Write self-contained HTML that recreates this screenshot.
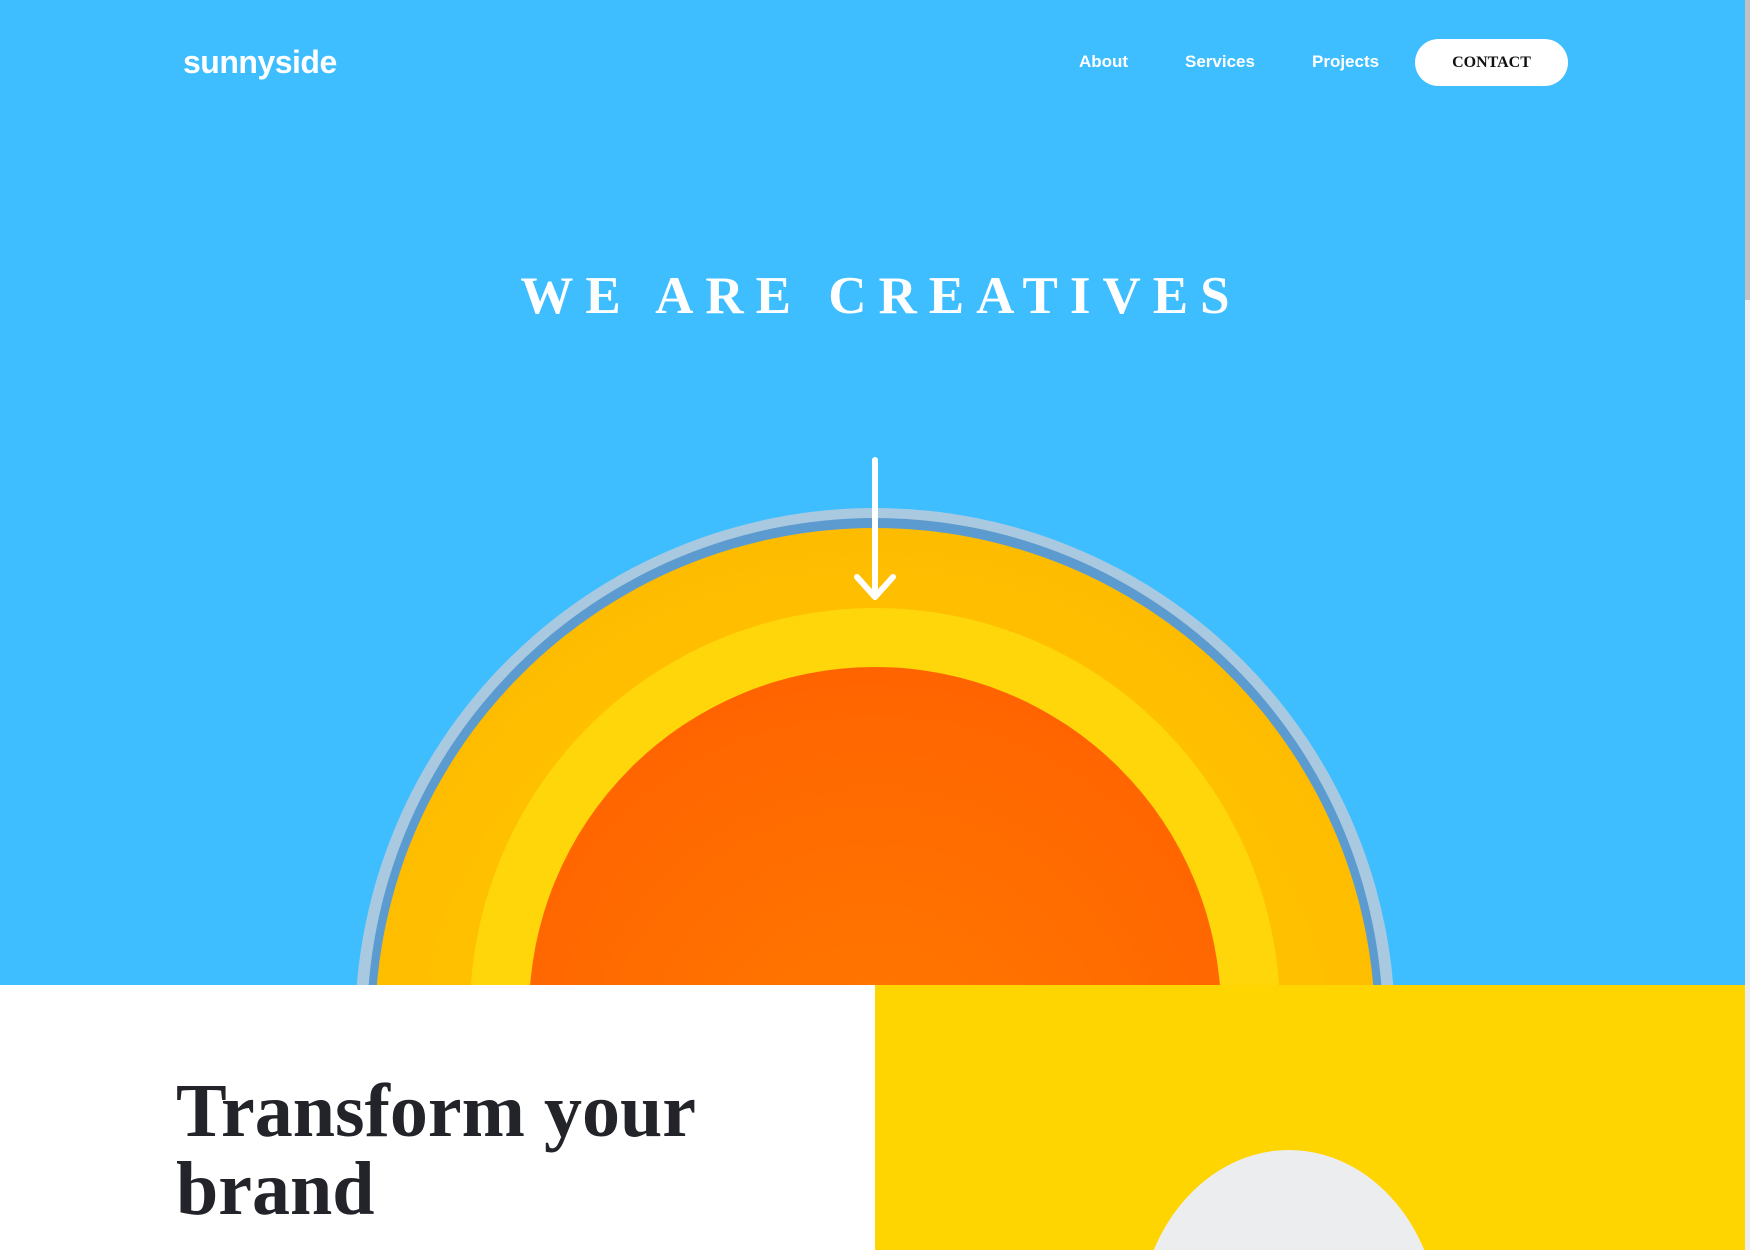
<!DOCTYPE html>
<html><head><style>
*{margin:0;padding:0;box-sizing:border-box}
html,body{width:1750px;height:1250px;overflow:hidden}
body{position:relative;background:#fff;font-family:"Liberation Sans",sans-serif}
.hero{position:absolute;left:0;top:0;width:1750px;height:985px;background:#3ebeff;overflow:hidden}
.c{position:absolute;border-radius:50%}
.logo{position:absolute;left:183px;top:44px;color:#fff;font-weight:bold;font-size:32px;letter-spacing:-0.5px}
.nav a{position:absolute;top:52px;color:#fff;font-size:17px;font-weight:bold;text-decoration:none}
.btn{position:absolute;left:1415px;top:39px;width:153px;height:47px;border-radius:24px;background:#fff;color:#111;font-family:"Liberation Serif",serif;font-weight:bold;font-size:16px;text-align:center;line-height:47px}
h1{position:absolute;left:0;width:1750px;top:266px;text-align:center;color:#fff;font-family:"Liberation Serif",serif;font-size:53px;letter-spacing:12px;font-weight:bold;padding-left:12px}
h2{position:absolute;left:176px;top:1072px;font-family:"Liberation Serif",serif;font-size:76px;line-height:78px;color:#23242a;font-weight:bold}
.sb{position:absolute;right:0;top:0;width:5px;height:1250px;background:#eee}
.sb div{width:5px;height:300px;background:#c1c1c1}
</style></head><body>
<div class="hero">
 <div class="c" style="left:355px;top:508px;width:1040px;height:1040px;background:#a9c9e0"></div>
 <div class="c" style="left:367px;top:518px;width:1016px;height:1016px;background:#5c9bd0"></div>
 <div class="c" style="left:375px;top:528px;width:1000px;height:1000px;background:radial-gradient(circle at 50% 55%,#ffc000 60%,#fdb300 100%)"></div>
 <div class="c" style="left:470px;top:608px;width:810px;height:810px;background:#ffd60a"></div>
 <div class="c" style="left:529px;top:667px;width:692px;height:692px;background:radial-gradient(circle at 50% 60%,#ff7a00,#ff6600 70%,#ff5a00)"></div>
 <svg style="position:absolute;left:850px;top:455px" width="50" height="150"><path d="M25 5V142M7 122L25 142L43 122" stroke="#fff" stroke-width="6" fill="none" stroke-linecap="round" stroke-linejoin="round"/></svg>
</div>
<div class="logo">sunnyside</div>
<div class="nav"><a style="left:1079px">About</a><a style="left:1185px">Services</a><a style="left:1312px">Projects</a></div>
<div class="btn">CONTACT</div>
<h1>WE ARE CREATIVES</h1>
<div style="position:absolute;left:875px;top:985px;width:875px;height:265px;background:#fed401;overflow:hidden">
 <div class="c" style="left:263px;top:165px;width:302px;height:360px;background:#ecedef"></div>
</div>
<h2>Transform your<br>brand</h2>
<div class="sb"><div></div></div>
</body></html>
